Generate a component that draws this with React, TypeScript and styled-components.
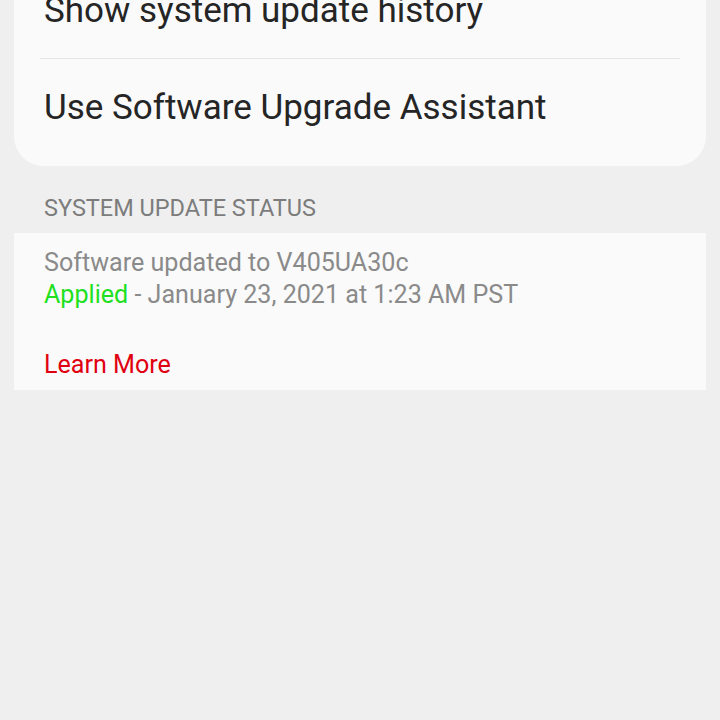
import styled, { createGlobalStyle } from "styled-components"

const GlobalStyle = createGlobalStyle`
  html, body {
    margin: 0;
    padding: 0;
    background: #efefef;
    font-family: Roboto, "Noto Sans", sans-serif;
    overflow: hidden;
  }
`

const menuItems = ["Show system update history", "Use Software Upgrade Assistant"]

export default function App() {
  return (
    <Page>
      <GlobalStyle />
      <MenuCard>
        {menuItems.map((label, i) => (
          <MenuRow key={label} $divider={i > 0}>
            {label}
          </MenuRow>
        ))}
      </MenuCard>
      <SectionTitle>SYSTEM UPDATE STATUS</SectionTitle>
      <StatusCard>
        <StatusLine>Software updated to V405UA30c</StatusLine>
        <StatusLine>
          <Applied>Applied</Applied> - January 23, 2021 at 1:23 AM PST
        </StatusLine>
        <LearnMore>Learn More</LearnMore>
      </StatusCard>
    </Page>
  )
}

const Page = styled.div`
  width: 720px;
  height: 720px;
  padding: 0 14px;
  box-sizing: border-box;
  display: flex;
  flex-direction: column;
`
const MenuCard = styled.div`
  margin-top: -38px;
  background: #fafafa;
  border-radius: 0 0 30px 30px;
  padding: 0 26px 11px 26px;
  display: flex;
  flex-direction: column;
`
const MenuRow = styled.div<{ $divider?: boolean }>`
  height: 96px;
  display: flex;
  align-items: center;
  padding: 0 4px;
  font-size: 35px;
  color: #252525;
  border-top: ${(p) => (p.$divider ? "1px solid #e6e6e6" : "none")};
`
const SectionTitle = styled.div`
  padding: 28px 30px 11px;
  font-size: 23.5px;
  line-height: 28px;
  color: #7c7c7c;
`
const StatusCard = styled.div`
  background: #fafafa;
  padding: 14px 30px 9px;
  display: flex;
  flex-direction: column;
`
const StatusLine = styled.div`
  font-size: 25.1px;
  line-height: 32px;
  color: #8a8a8a;
`
const Applied = styled.span`
  color: #1ee01e;
`
const LearnMore = styled.div`
  margin-top: 38px;
  font-size: 25.1px;
  line-height: 32px;
  color: #e00010;
`
